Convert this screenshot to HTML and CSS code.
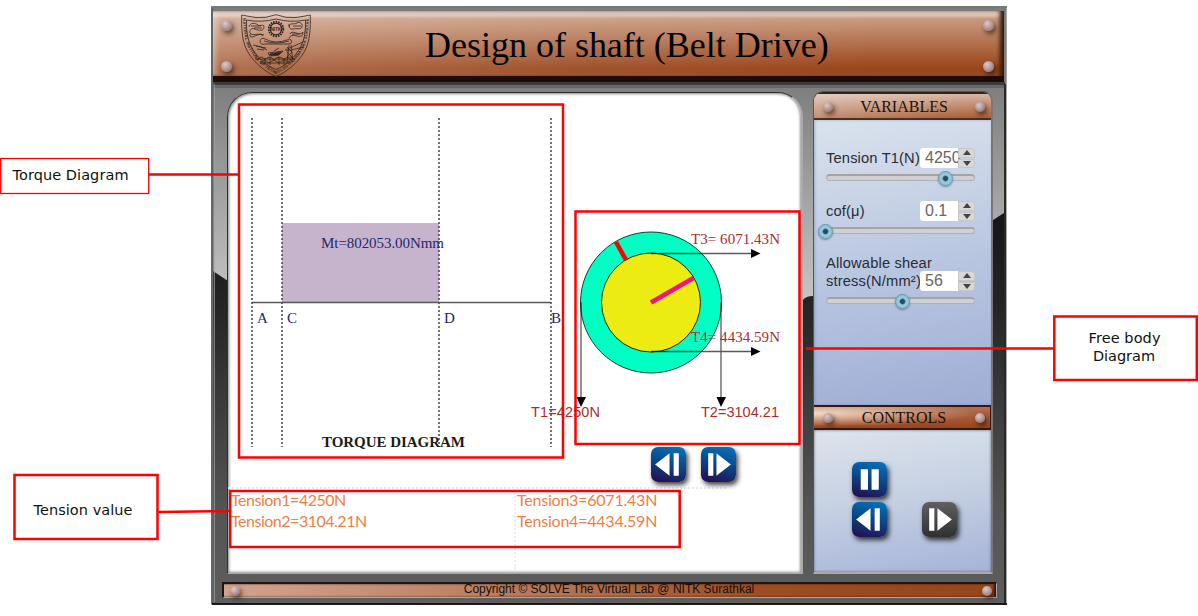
FILE: index.html
```html
<!DOCTYPE html>
<html lang="en">
<head>
<meta charset="utf-8">
<title>Design of shaft (Belt Drive)</title>
<link rel="stylesheet" href="styles.css">
</head>
<body>
<div class="lab">
  <svg class="backdrop" viewBox="211 6 796 599" aria-hidden="true">
    <defs>
      <linearGradient id="steel" gradientUnits="userSpaceOnUse" x1="0" y1="80" x2="0" y2="300">
        <stop offset="0" stop-color="#7c7c7c"/><stop offset="1" stop-color="#c4c4c4"/>
      </linearGradient>
      <linearGradient id="dark" gradientUnits="userSpaceOnUse" x1="0" y1="215" x2="0" y2="605">
        <stop offset="0" stop-color="#161616"/><stop offset=".25" stop-color="#262626"/><stop offset=".75" stop-color="#545454"/><stop offset="1" stop-color="#5e5e5e"/>
      </linearGradient>
    </defs>
    <rect x="211" y="6" width="796" height="599" fill="url(#steel)"/>
    <path d="M213 271L228 281L300 300H803Q806 296 813 296L990 222L1007 211V605H213Z" fill="url(#dark)"/>
    <path d="M213 82H1005V85H213Z" fill="#3d3d3d"/>
    <path d="M213 85H1005V88H213Z" fill="#666"/>
    <path d="M212 6V604" stroke="#62666a" stroke-width="3"/>
    <path d="M214.500 84V602" stroke="#a5a5a5" stroke-opacity=".65"/>
    <path d="M211 7H1007" stroke="#747a74" stroke-width="2"/>
    <path d="M1005 84V604" stroke="#292929" stroke-width="2"/>
    <path d="M1006.500 8V605" stroke="#aaa"/>
    <path d="M212 604H1007" stroke="#191919" stroke-width="2"/>
  </svg>
  <div class="content">
    <header class="banner">
      <div class="rivets"><i class="rivet"></i><i class="rivet"></i></div>
      <svg class="crest" viewBox="0 0 70 63" fill="none" stroke="#30241e" stroke-width=".8">
        <defs><path id="crest-text" d="M2 4Q2 21 7 33Q16 51 35 60Q54 51 63 33Q68 21 68 4"/></defs>
        <path d="M.7 1Q8 2.500 15 3.500Q25 4.500 35 .7Q45 4.500 55 3.500Q62 2.500 69.300 1Q70 21 66 32C61 46 46 58 35 62.500C24 58 9 46 4 32Q0 21 .7 1Z"/>
        <path d="M5.500 6Q20 9 35 5Q50 9 64.500 6Q65 23 60 32C54 44 44 52 35 55.500C26 52 16 44 10 32Q5 23 5.500 6Z"/>
        <circle cx="35" cy="15" r="7.300" stroke-width="1.800" stroke-dasharray="1.600 1"/>
        <circle cx="35" cy="15" r="5.800" stroke-width="1.200"/>
        <text x="35" y="16.800" class="crest-name">NITK</text>
        <path d="M8 13C9 8 15 9 17 11S23 9 23 13S18 17 14 15S7 18 10 20S19 18 22 22M9 20Q8 25 14 22T23 21M48 13C48 8 53 11 56 9S62 10 61 13S55 14 52 15S48 13 48 10M49 20Q50 17 55 19T62 18Q62 24 56 22T48 24M10 12H20M52 12H60M13 14H21M51 20H59"/>
        <path d="M19 27Q19 31 24 30H47Q52 30 50 26Q49 24 46 26Q40 28 35 28T24 25Q20 23 19 27ZM23 27Q35 31 48 27"/>
        <path d="M12 31L20 33L26 36M15 32L25 34M16 35L23 36M27 39L42 37L38 41L29 42ZM33 37L38 34M44 36L62 28M45 37L63 33M48 31L46 48M50 31L52 48M46 33L51 38L46 43L52 48M46 38L51 43"/>
        <path d="M29 40L40 38L37 41L29 41Z" fill="#30241e"/>
        <path d="M15 46V41M17 46Q20 40 24 46Q28 40 33 46Q38 40 43 46Q48 40 54 46M19 49Q23 44 28 49Q33 44 38 49Q43 44 50 49M24 44V51M29 43V51M38 43V51M43 44V51M16 45H54M19 49H50"/>
        <text class="crest-motto"><textPath href="#crest-text" textLength="144">NATIONAL INSTITUTE OF TECHNOLOGY KARNATAKA SURATHKAL</textPath></text>
      </svg>
      <h1>Design of shaft (Belt Drive)</h1>
      <div class="rivets"><i class="rivet"></i><i class="rivet"></i></div>
    </header>

    <div class="columns">
      <main class="stage">
        <svg class="plots" viewBox="228 93 574 354">
          <rect x="282" y="223" width="157" height="79" fill="#c6b4cd"/>
          <path d="M252 302.500H551" stroke="#000" stroke-opacity=".65" stroke-width="1.500"/>
          <g stroke="#444" stroke-width="1.500" stroke-dasharray="2 2"><path d="M252 118V447M282 118V447M439 118V447M551 118V447"/></g>
          <g class="serif navy">
            <text x="321" y="248" textLength="123">Mt=802053.00Nmm</text>
            <text x="257" y="323">A</text><text x="287" y="323">C</text><text x="444" y="323">D</text><text x="551" y="323">B</text>
          </g>
          <text x="322" y="446.500" textLength="143" class="caption">TORQUE DIAGRAM</text>
          <circle cx="651" cy="302.500" r="70.500" fill="#00ffc2" stroke="#143"/>
          <circle cx="651" cy="302.500" r="49.500" fill="#ecec13" stroke="#220"/>
          <path d="M616 242L626 260" stroke="#f00" stroke-width="4.500"/>
          <path d="M651 302.500L693.500 278" stroke="#f3127f" stroke-width="4.500"/>
          <g stroke="#000" stroke-opacity=".65" stroke-width="1.300"><path d="M651 253.500H752M651 351.500H752M581 302V399M721 302V399"/></g>
          <path d="M751 249L760.500 253.500L751 258ZM751 347L760.500 351.500L751 356ZM576.500 397H586L581 407ZM716.500 397H726L721 407Z"/>
          <g class="serif red"><text x="691" y="243.500" textLength="89">T3= 6071.43N</text><text x="691" y="341.500" textLength="89">T4= 4434.59N</text></g>
          <g class="sans red"><text x="531" y="417" textLength="69">T1=4250N</text><text x="701" y="417" textLength="78">T2=3104.21</text></g>
        </svg>
        <div class="steps">
          <button class="key"><svg viewBox="0 0 34 34"><path d="M4 17L18 6V28ZM22 6H27V28H22Z"/></svg></button>
          <button class="key"><svg viewBox="0 0 34 34"><path d="M7 6H12V28H7ZM15 6L29 17L15 28Z"/></svg></button>
        </div>
        <div class="tensions">
          <p class="first">Tension1=4250N<br>Tension2=3104.21N</p>
          <p class="second">Tension3=6071.43N<br>Tension4=4434.59N</p>
        </div>
      </main>

      <aside class="side">
        <div class="plate plate-top"><i class="rivet"></i><h2>VARIABLES</h2><i class="rivet"></i></div>
        <div class="variables">
          <div class="field">
            <div class="row"><label>Tension T1(N)</label><span class="value">4250</span><span class="spin"><i class="up"></i><i class="down"></i></span></div>
            <div class="track"><i class="knob" style="left:119px"></i></div>
          </div>
          <div class="field">
            <div class="row"><label>cof(μ)</label><span class="value">0.1</span><span class="spin"><i class="up"></i><i class="down"></i></span></div>
            <div class="track"><i class="knob" style="left:-1px"></i></div>
          </div>
          <div class="field">
            <div class="row tall"><label>Allowable shear<br>stress(N/mm²)</label><span class="value">56</span><span class="spin"><i class="up"></i><i class="down"></i></span></div>
            <div class="track"><i class="knob" style="left:76px"></i></div>
          </div>
        </div>
        <div class="plate plate-mid"><i class="rivet"></i><h2>CONTROLS</h2><i class="rivet"></i></div>
        <div class="controls">
          <button class="key pause"><svg viewBox="0 0 34 34"><path d="M8.500 7H15.500V27H8.500ZM19 7H26V27H19Z"/></svg></button>
          <button class="key"><svg viewBox="0 0 34 34"><path d="M4 17L18 6V28ZM22 6H27V28H22Z"/></svg></button>
          <button class="key off"><svg viewBox="0 0 34 34"><path d="M7 6H12V28H7ZM15 6L29 17L15 28Z"/></svg></button>
        </div>
      </aside>
    </div>

    <footer class="foot"><i class="rivet"></i><span>Copyright © SOLVE The Virtual Lab @ NITK Surathkal</span><i class="rivet"></i></footer>
  </div>
</div>

<svg class="notes" viewBox="0 0 1198 616">
  <g fill="none" stroke="#f00" stroke-width="2.500">
    <rect x="239" y="104.500" width="324" height="353"/>
    <rect x="575.500" y="211.500" width="224" height="232.500"/>
    <rect x="230.200" y="491" width="449.500" height="56"/>
    <path d="M149 174.500H239M158 512L230 511M806 348.500H1054"/>
    <rect x=".7" y="158.500" width="148" height="35" stroke-width="1.300"/>
    <rect x="14.500" y="475" width="143" height="64"/>
    <rect x="1054.300" y="316.500" width="142.500" height="63.500"/>
  </g>
  <g class="note-text">
    <text x="12.500" y="180" textLength="116">Torque Diagram</text>
    <text x="33.500" y="514.500" textLength="99">Tension value</text>
    <text x="1088.500" y="343" textLength="72">Free body</text>
    <text x="1093" y="361" textLength="62">Diagram</text>
  </g>
</svg>
</body>
</html>
```
FILE: styles.css
```css
* { box-sizing: border-box; }
body { margin: 0; width: 1198px; height: 616px; overflow: hidden; background: #fff; position: relative; }
h1, h2, p { margin: 0; font-weight: normal; }

.lab { display: grid; width: 796px; height: 599px; margin: 6px 0 0 211px; }
.backdrop, .content { grid-area: 1 / 1; width: 796px; height: 599px; }
.content { position: relative; display: flex; flex-direction: column; padding: 5px 3px 0 2px; }

.banner {
  height: 71px; display: flex; align-items: flex-start; padding: 8px 10px 0 8px;
  background: linear-gradient(100deg, rgba(255,255,255,.24), rgba(255,255,255,.08) 45%, transparent 85%),
    linear-gradient(#dcc0b2, #c99a80 12%, #9a461b 88%);
  border-bottom: 6px solid #1f0d04;
  box-shadow: inset -5px 0 4px -1px #32180b, inset 4px 0 4px rgba(255,255,255,.25), inset 0 6px 3px rgba(255,255,255,.28);
}
.rivets { display: flex; flex-direction: column; gap: 30px; padding-top: 1px; }
.rivet {
  display: block; flex: none; width: 11px; height: 11px; border-radius: 50%;
  background: radial-gradient(circle at 38% 32%, #dccaca, #b79a9a 45%, #806464 95%);
  box-shadow: 2px 3px 5px rgba(40,15,5,.65);
}
.crest { width: 70px; height: 63px; margin: -5px 0 0 9px; overflow: visible; }
.crest-name { font: bold 4.500px "Liberation Sans", sans-serif; text-anchor: middle; fill: #30241e; stroke: none; }
.crest-motto { font: bold 4px "Liberation Sans", sans-serif; fill: #30241e; stroke: none; }
.banner h1 { flex: 1; padding: 6px 0 0 114px; font: 36px/40px "Liberation Serif", serif; letter-spacing: -.01px; color: #000; white-space: nowrap; }

.columns { display: flex; height: 482px; margin-top: 10px; padding-left: 14px; gap: 10px; }
.stage {
  width: 576px; height: 482px; background: #fff; border-radius: 25px 25px 0 0;
  border: 1px solid #303030; border-bottom-color: #aaa; border-right: 2px solid #aaa;
  box-shadow: inset 1px 1px 3px #888, inset -1px -1px 3px #999;
}
.plots { display: block; width: 574px; height: 354px; overflow: visible; }
.serif { font: 15px "Liberation Serif", serif; }
.sans { font: 14.500px "Liberation Sans", sans-serif; }
.navy { fill: #26266e; }
.red { fill: #ad2b2b; }
.caption { font: bold 15px "Liberation Serif", serif; fill: #1b1b1b; }
.steps { display: flex; gap: 15px; height: 40px; padding-left: 423px; }
.key {
  width: 35px; height: 35px; padding: 0; border: 0; border-radius: 7px;
  background: linear-gradient(195deg, #0874bf, #084b8d 45%, #24104f 95%);
  box-shadow: 2px 3px 5px rgba(0,0,0,.75);
}
.key svg { display: block; width: 35px; height: 35px; fill: #fff; }
.key.off { background: linear-gradient(#606060, #303030); }
.tensions {
  display: flex; width: 498px; height: 82px; border-top: 2px dotted #eee8ea;
  font: 16px/21px Lato, sans-serif; color: #ec8143;
}
.first { width: 286px; padding: 0 0 0 3px; letter-spacing: -.48px; }
.second { padding: 0 0 0 1px; border-left: 2px dotted #f6eaec; letter-spacing: -.22px; }

.side { display: flex; flex-direction: column; width: 180px; height: 483px; border: 1px solid #555; border-bottom: 2px solid #aaa; border-right: 2px solid #777; border-radius: 10px 10px 0 0; overflow: hidden; margin-top: -1px; }
.plate { display: flex; align-items: center; justify-content: space-between; padding: 0 6px 0 9px; }
.plate .rivet { width: 10px; height: 10px; }
.plate h2 { font: 16px/22px "Liberation Serif", serif; color: #1a100a; }
.plate-top { height: 28px; padding-top: 1px; border-top: 2px solid #2c2421; border-bottom: 2px solid #4a2e20; background: linear-gradient(100deg, rgba(255,255,255,.3), transparent 85%), linear-gradient(#d8b7a5, #aa6039); }
.plate-mid { height: 25px; padding-right: 5px; border: solid #36190c; border-width: 2px 1px 2px 0; background: radial-gradient(ellipse at 0 30%, #f2dccb, transparent 65%), linear-gradient(#b37050, #97451c); }
.variables { height: 285px; padding: 28px 0 0 12px; display: flex; flex-direction: column; gap: 20px; background: linear-gradient(170deg, #dae2ed, #bac7e1 50%, #9fadd5); box-shadow: inset 1px 0 3px #66779977; }
.field { width: 149px; }
.row { display: flex; align-items: flex-end; height: 20px; font: 14.700px/18px "Liberation Sans", sans-serif; color: #292c33; }
.row.tall { height: 37px; }
.row label { width: 94px; white-space: nowrap; padding-bottom: 1px; letter-spacing: .15px; }
.value { z-index: 1; width: 38px; height: 20px; padding-left: 5px; background: #fff; border-radius: 3px 0 0 3px; font-size: 16px; line-height: 20px; color: #666; }
.spin { z-index: 2; display: flex; flex-direction: column; gap: 1px; width: 17px; height: 20px; }
.spin i { display: flex; align-items: center; justify-content: center; flex: 1; background: #d8d8d8; border: 1px solid #c6c6c6; border-radius: 0 3px 0 0; }
.spin i.down { border-radius: 0 0 3px; }
.spin i::after { content: ""; border: 4px solid transparent; }
.spin .up::after { border-top: 0; border-bottom: 5px solid #444; }
.spin .down::after { border-bottom: 0; border-top: 5px solid #444; }
.track { position: relative; height: 7px; margin: 6px 0 0; background: #d0d0d1; border: 1px solid #aeb0b5; border-top: 2px solid #a2a4aa; border-radius: 4px; }
.knob { position: absolute; top: -5px; width: 15px; height: 15px; margin-left: -8px; border-radius: 50%; border: 1px solid #6596ad; background: radial-gradient(circle, #214e60 0 2px, #99cbe1 3.500px, #83b9d1); box-shadow: 0 1px 2px #4448; }
.controls { flex: 1; display: grid; grid-template-columns: 70px 35px; grid-template-rows: 40px 35px; align-content: start; padding: 32px 0 0 38px; background: linear-gradient(170deg, #dde4ec, #c4cfe2 50%, #a5b3d8); box-shadow: inset 0 0 3px #667; }
.pause { grid-column: 1 / 3; }

.foot { display: flex; align-items: center; justify-content: space-between; width: 775px; height: 16px; margin: 8px 0 0 9px; padding: 0 4px 0 6px; border: 1px solid #aaa; border-top: 2px solid #201510; border-left: 2px solid #201510; background: linear-gradient(90deg, #d0a48f, #b87858 40%, #9e4c21 70%, #97451b); box-shadow: inset -2px 0 2px #31180c; }
.foot .rivet { width: 10px; height: 10px; }
.foot span { font: 12px/14px "Liberation Sans", sans-serif; color: #160e0a; padding: 0 4px 3px 0; }

.notes { position: absolute; left: 0; top: 0; width: 1198px; height: 616px; pointer-events: none; }
.note-text { font: 14.500px "DejaVu Sans", sans-serif; fill: #111; }
```
